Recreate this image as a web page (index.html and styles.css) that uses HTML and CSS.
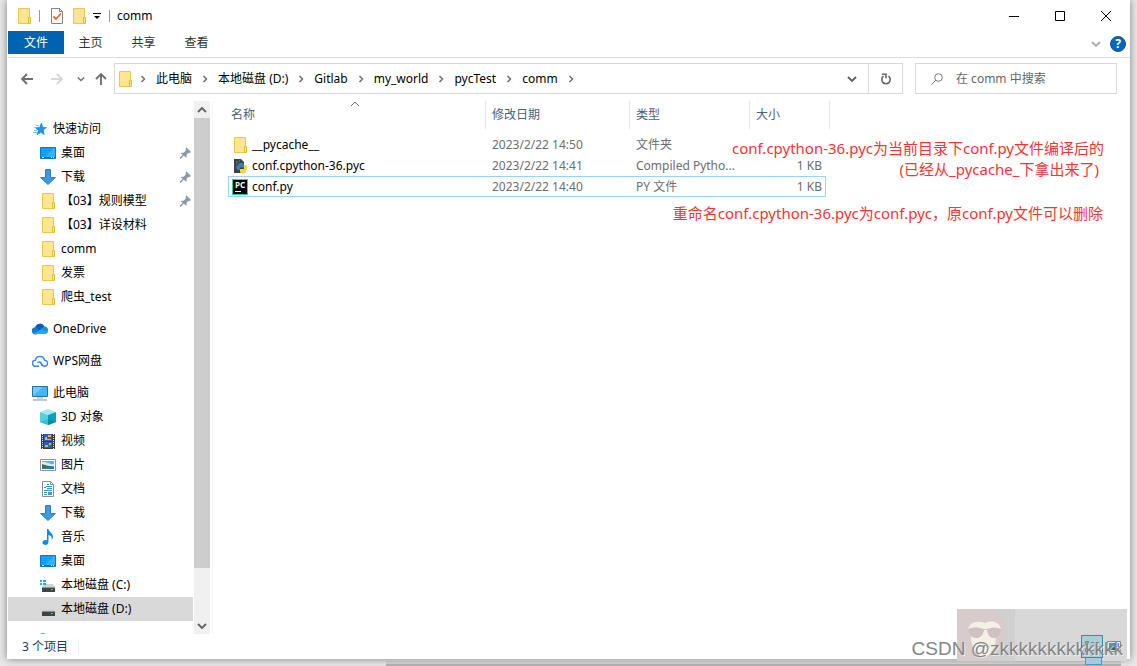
FILE: index.html
```html
<!doctype html>
<html lang="zh-CN">
<head>
<meta charset="utf-8">
<title>comm</title>
<link rel="stylesheet" href="styles.css">
</head>
<body>
<!-- 图标 -->
<svg class="defs" aria-hidden="true">
	<symbol id="i-folder" viewBox="0 0 16 16">
		<path d="M2.500 .5h11v15h-11z" fill="#ffe591" stroke="#ecc64a"/>
		<path d="M12.500 9.500h2v6h-2z" fill="#ffe591" stroke="#e3b93c"/>
	</symbol>
	<symbol id="i-star" viewBox="0 0 16 16">
		<path d="M9.500 2l1.200 4.200 3.800.3-3.200 2.500.9 4.500-3.400-2.300-3.800 2.600 1.300-4.300-2.800-2.700 4-.3z" fill="#1c97ea" stroke="#0d7bc8" stroke-width=".6"/>
		<path d="M4 4.500h3M2 6.500h2M2 9.500h3M1 11.500h4" stroke="#7cc4ef"/>
	</symbol>
	<symbol id="i-desktop" viewBox="0 0 16 16">
		<path d="M.5 2.500h15v11H.5z" fill="#12a0ff" stroke="#0877c0"/>
		<path d="M5 12L14 3h1v9z" fill="#36b1ff"/>
		<path d="M1 12.500h14" stroke="#0870b8"/>
		<path d="M2 12.500h2M11 12.500h1M13 12.500h1" stroke="#fff"/>
	</symbol>
	<symbol id="i-down" viewBox="0 0 16 16">
		<path d="M5.500.5h5v8h5L8 15.500.5 8.500h5z" fill="#3f97e8" stroke="#2a7dc9"/>
	</symbol>
	<symbol id="i-pin" viewBox="0 0 16 16">
		<path d="M9 3.500l4 4-2.500 1-1 1.500.2 3L3.500 8l3-.2L8.500 6z" fill="#8b99a6"/>
		<path d="M9 3l4.500 4.500M6.500 10L3 13.500" stroke="#8b99a6" stroke-width="1.500"/>
	</symbol>
	<symbol id="i-onedrive" viewBox="0 0 16 16">
		<path d="M3 7a5 5 0 0 1 9.500-1.500L9 11z" fill="#0a5fb4"/>
		<path d="M0 10.500A3.300 3.300 0 0 1 4.500 6.500L11 12l-7.500 1.500A3 3 0 0 1 0 10.500z" fill="#1379d0"/>
		<path d="M8 8.500l4-3A3.600 3.600 0 0 1 16 10l-1 2z" fill="#1490df"/>
		<path d="M1.500 12.600L9 8.500l6.700 2.500a2.500 2.500 0 0 1-2.400 2H3.500z" fill="#28a8ea"/>
	</symbol>
	<symbol id="i-wps" viewBox="0 0 16 16">
		<path d="M7 13.300H3.700A2.900 2.900 0 0 1 3.300 7.300 4.700 4.700 0 0 1 12.500 7.200a3 3 0 0 1 0 6.100c-2.500 0-2.500-3-4.500-3.500M5.500 9.700c2.500-1.700 5 .3 4 3.300" fill="none" stroke="#4186f5" stroke-width="1.500"/>
	</symbol>
	<symbol id="i-pc" viewBox="0 0 16 16">
		<path d="M.5 1.500h15v10H.5z" fill="#45b6fb" stroke="#23709e"/>
		<path d="M1 11L11 2H1z" fill="#74caff"/>
		<path d="M5 13h6" stroke="#9aa9b4"/>
		<path d="M1 15h14" stroke="#7e929f"/>
	</symbol>
	<symbol id="i-cube" viewBox="0 0 16 16">
		<path d="M0 3L8 0l8 3-8 3z" fill="#a5e9ef"/>
		<path d="M0 3l8 3v10l-8-3z" fill="#54cfdd"/>
		<path d="M16 3L8 6v10l8-3z" fill="#05a3c3"/>
		<path d="M8 10l8 3-8 3z" fill="#058d9c"/>
		<path d="M0 13l8-3v6z" fill="#35bccd"/>
	</symbol>
	<symbol id="i-video" viewBox="0 0 16 16">
		<path d="M1 1h14v15H1z" fill="#3c3c3c"/>
		<path d="M4 1h8v7H4zM4 9h8v6H4z" fill="#2860bd"/>
		<path d="M5 4h2v2h4v1H5zM8 2h3v2H8zM5 12h3v2H5zM9 10h2v2H9z" fill="#e8b52e"/>
		<path d="M7 5h2v1H7zM8 12h2v1H8z" fill="#c9442c"/>
		<path d="M2.500 1v15M13.500 1v15" stroke="#e3e3e3" stroke-dasharray="1 1"/>
	</symbol>
	<symbol id="i-picture" viewBox="0 0 16 16">
		<path d="M.5 2.500h15v11H.5z" fill="#fff" stroke="#8d959b"/>
		<path d="M2 4h12v8H2z" fill="#68aeea"/>
		<path d="M2 5h3l6 2h3v2H2z" fill="#d7ecf8"/>
		<path d="M2 7l3 1 4 1 5 1v2H2z" fill="#3e6c5c"/>
		<path d="M2 10.500h12V12H2z" fill="#2879a9"/>
	</symbol>
	<symbol id="i-doc" viewBox="0 0 16 16">
		<path d="M2.500.5h8l3 3v12h-11z" fill="#fff" stroke="#8a8f93"/>
		<path d="M10.500.5v3h3" fill="none" stroke="#8a8f93"/>
		<path d="M4 6.500h2M7 3.500h2M6 5.500h6M7 7.500h5M4 9.500h8M4 11.500h3M4 13.500h3" stroke="#2c94d8"/>
		<path d="M8 11h4v3H8z" fill="#5392b9"/>
	</symbol>
	<symbol id="i-music" viewBox="0 0 16 16">
		<path d="M7 0h1.500c.3 3 4.500 4 4.500 7.500 0 1.500-.5 2.500-1.500 3.500.8-3-.5-4.500-3-5v7c0 4-6 3.500-6 .7C2.500 11.500 5 10.500 7 11.300z" fill="#0b8de5"/>
	</symbol>
	<symbol id="i-disk" viewBox="0 0 16 16">
		<path d="M4 8h9l2 2.500H2z" fill="#cfd2d3"/>
		<path d="M2 10.500h13V15H2z" fill="#404446"/>
		<path d="M11 12.500h2" stroke="#45e16c"/>
	</symbol>
	<symbol id="i-sysdisk" viewBox="0 0 16 16">
		<path d="M5 7h8l2 3.500H2z" fill="#cfd2d3"/>
		<path d="M2 10.500h13V15H2z" fill="#404446"/>
		<path d="M11 12.500h2" stroke="#45e16c"/>
		<path d="M0 3h2v2H0zM3 3h3v2H3zM0 6h2v2H0zM3 6h3v2H3z" fill="#0fb3ec"/>
	</symbol>
	<symbol id="i-net" viewBox="0 0 16 16">
		<circle cx="3" cy="5" r="5" fill="#53b7b4"/>
	</symbol>
	<symbol id="i-pyc" viewBox="0 0 16 16">
		<path d="M2 1h7l3 3v11H2z" fill="#39424a"/>
		<path d="M4 4h2M4 6h1M4 9h1M7 3h1" stroke="#7c8890"/>
		<path d="M6 7c0-3 6-3 6 0v2.500H8v2.500H6c-2-1-1.500-4 0-5z" fill="#3d7db5"/>
		<path d="M12 7h2c2 1 1.500 5 0 5v2c-1 2.500-5 2-6 0v-3h4z" fill="#ffd43e"/>
	</symbol>
	<symbol id="i-check" viewBox="0 0 16 16">
		<path d="M2.500.5h8l3 3v12h-11z" fill="#fafafa" stroke="#858585"/>
		<path d="M10.500.5v3h3" fill="none" stroke="#858585"/>
		<path d="M4.500 8.500L7 11l5-5.500" fill="none" stroke="#f0642b" stroke-width="1.800"/>
	</symbol>
	<symbol id="i-right" viewBox="0 0 8 8"><path d="M2.500 1L5.500 4l-3 3" fill="none" stroke="currentColor" stroke-width="1.500"/></symbol>
	<symbol id="i-chev" viewBox="0 0 10 10"><path d="M1 3l4 4 4-4" fill="none" stroke="currentColor" stroke-width="1.800"/></symbol>
	<symbol id="i-chevup" viewBox="0 0 10 10"><path d="M1 7l4-4 4 4" fill="none" stroke="currentColor" stroke-width="1.800"/></symbol>
	<symbol id="i-sort" viewBox="0 0 10 10"><path d="M1 7l4-4 4 4" fill="none" stroke="currentColor"/></symbol>
	<symbol id="i-arrow" viewBox="0 0 16 16"><path d="M14 8H3M8 3L3 8l5 5" fill="none" stroke="currentColor" stroke-width="1.900"/></symbol>
</svg>

<div class="window">
	<header class="titlebar">
		<svg class="ico"><use href="#i-folder"/></svg>
		<i class="sep"></i>
		<button class="quick" aria-label="属性"><svg class="ico"><use href="#i-check"/></svg></button>
		<button class="quick" aria-label="新建文件夹"><svg class="ico"><use href="#i-folder"/></svg></button>
		<button class="more" aria-label="自定义快速访问工具栏"><svg width="8" height="8" viewBox="0 0 8 8"><path d="M0 1.500h8" stroke="#000"/><path d="M1 4h6L4 7z"/></svg></button>
		<i class="sep"></i>
		<h1>comm</h1>
		<div class="controls">
			<button aria-label="最小化"><svg width="10" height="10"><path d="M0 5.500h10" stroke="#000"/></svg></button>
			<button aria-label="最大化"><svg width="10" height="10"><path d="M.5.5h9v9h-9z" fill="none" stroke="#000"/></svg></button>
			<button aria-label="关闭"><svg width="10" height="10"><path d="M0 0l10 10M10 0L0 10" stroke="#000"/></svg></button>
		</div>
	</header>

	<nav class="ribbon">
		<button class="tab on">文件</button>
		<button class="tab">主页</button>
		<button class="tab">共享</button>
		<button class="tab">查看</button>
		<div class="help">
			<button aria-label="展开功能区"><svg class="chev light"><use href="#i-chev"/></svg></button>
			<button class="ask" aria-label="帮助">?</button>
		</div>
	</nav>

	<div class="toolbar">
		<div class="nav">
			<button aria-label="后退"><svg class="ico"><use href="#i-arrow"/></svg></button>
			<button class="off" aria-label="前进"><svg class="ico flip"><use href="#i-arrow"/></svg></button>
			<button class="recent" aria-label="最近浏览的位置"><svg><use href="#i-chev"/></svg></button>
			<button aria-label="上移"><svg class="ico up"><use href="#i-arrow"/></svg></button>
		</div>
		<div class="address">
			<svg class="ico"><use href="#i-folder"/></svg>
			<svg class="arr"><use href="#i-right"/></svg>
			<a href="#">此电脑</a><svg class="arr"><use href="#i-right"/></svg>
			<a href="#">本地磁盘 (D:)</a><svg class="arr"><use href="#i-right"/></svg>
			<a href="#">Gitlab</a><svg class="arr"><use href="#i-right"/></svg>
			<a href="#">my_world</a><svg class="arr"><use href="#i-right"/></svg>
			<a href="#">pycTest</a><svg class="arr"><use href="#i-right"/></svg>
			<a href="#">comm</a><svg class="arr"><use href="#i-right"/></svg>
			<button class="drop" aria-label="以前的位置"><svg class="chev"><use href="#i-chev"/></svg></button>
			<button class="refresh" aria-label="刷新"><svg width="12" height="12" viewBox="0 0 12 12"><path d="M8.500 3.200A4.200 4.200 0 1 1 3.500 3.200M2 1.200h4v4" fill="none" stroke="#666" stroke-width="1.600"/></svg></button>
		</div>
		<label class="search">
			<svg width="12" height="12" viewBox="0 0 12 12"><circle cx="7.500" cy="4.500" r="3.800" fill="none" stroke="#777"/><path d="M4.800 7.200L.5 11.500" stroke="#777"/></svg>
			<input type="text" placeholder="在 comm 中搜索" aria-label="搜索">
		</label>
	</div>

	<main class="content">
		<aside class="tree">
			<ul>
				<li class="root"><svg class="ico"><use href="#i-star"/></svg><a href="#">快速访问</a></li>
				<li><svg class="ico"><use href="#i-desktop"/></svg><a href="#">桌面</a><svg class="ico pin"><use href="#i-pin"/></svg></li>
				<li><svg class="ico"><use href="#i-down"/></svg><a href="#">下载</a><svg class="ico pin"><use href="#i-pin"/></svg></li>
				<li><svg class="ico"><use href="#i-folder"/></svg><a href="#">【03】规则模型</a><svg class="ico pin"><use href="#i-pin"/></svg></li>
				<li><svg class="ico"><use href="#i-folder"/></svg><a href="#">【03】详设材料</a></li>
				<li><svg class="ico"><use href="#i-folder"/></svg><a href="#">comm</a></li>
				<li><svg class="ico"><use href="#i-folder"/></svg><a href="#">发票</a></li>
				<li><svg class="ico"><use href="#i-folder"/></svg><a href="#">爬虫_test</a></li>
			</ul>
			<ul>
				<li class="root"><svg class="ico"><use href="#i-onedrive"/></svg><a href="#">OneDrive</a></li>
			</ul>
			<ul>
				<li class="root"><svg class="ico"><use href="#i-wps"/></svg><a href="#">WPS网盘</a></li>
			</ul>
			<ul>
				<li class="root"><svg class="ico"><use href="#i-pc"/></svg><a href="#">此电脑</a></li>
				<li><svg class="ico"><use href="#i-cube"/></svg><a href="#">3D 对象</a></li>
				<li><svg class="ico"><use href="#i-video"/></svg><a href="#">视频</a></li>
				<li><svg class="ico"><use href="#i-picture"/></svg><a href="#">图片</a></li>
				<li><svg class="ico"><use href="#i-doc"/></svg><a href="#">文档</a></li>
				<li><svg class="ico"><use href="#i-down"/></svg><a href="#">下载</a></li>
				<li><svg class="ico"><use href="#i-music"/></svg><a href="#">音乐</a></li>
				<li><svg class="ico"><use href="#i-desktop"/></svg><a href="#">桌面</a></li>
				<li><svg class="ico"><use href="#i-sysdisk"/></svg><a href="#">本地磁盘 (C:)</a></li>
				<li class="on"><svg class="ico"><use href="#i-disk"/></svg><a href="#">本地磁盘 (D:)</a></li>
			</ul>
			<ul>
				<li><svg class="ico"><use href="#i-net"/></svg></li>
			</ul>
		</aside>
		<div class="scroll">
			<svg class="chev"><use href="#i-chevup"/></svg>
			<div class="track"><div class="thumb"></div></div>
			<svg class="chev"><use href="#i-chev"/></svg>
		</div>
		<section class="files">
			<table>
				<colgroup><col class="name"><col class="date"><col class="type"><col class="size"><col class="edge"></colgroup>
				<thead>
					<tr>
						<th>名称<svg class="sort"><use href="#i-sort"/></svg></th>
						<th>修改日期</th>
						<th>类型</th>
						<th colspan="2">大小</th>
					</tr>
				</thead>
				<tbody>
					<tr><td><span class="file"><svg class="ico"><use href="#i-folder"/></svg>__pycache__</span></td><td>2023/2/22 14:50</td><td>文件夹</td><td class="kb"></td></tr>
					<tr><td><span class="file"><svg class="ico"><use href="#i-pyc"/></svg>conf.cpython-36.pyc</span></td><td>2023/2/22 14:41</td><td>Compiled Pytho...</td><td class="kb">1 KB</td></tr>
					<tr class="focus"><td><span class="file"><span class="pc">PC</span>conf.py</span></td><td>2023/2/22 14:40</td><td>PY 文件</td><td class="kb">1 KB</td></tr>
				</tbody>
			</table>
			<div class="note first">
				<p>conf.cpython-36.pyc为当前目录下conf.py文件编译后的</p>
				<p class="sub">(已经从_pycache_下拿出来了)</p>
			</div>
			<p class="note second">重命名conf.cpython-36.pyc为conf.pyc，原conf.py文件可以删除</p>
		</section>
	</main>

	<footer class="status"><span>3 个项目</span></footer>
</div>
<div class="behind"></div>

<div class="badge">
	<svg class="face" width="58" height="52" viewBox="0 0 58 52">
		<path d="M0 0h58v52H0z" fill="#d0d0d0"/>
		<path d="M0 0h34c9 4 14 9 14 18 3 9 0 18-6 22l-6 12H0z" fill="#d8cbcb"/>
		<path d="M11 20c2-7 9-9 17-6 8-3 13-1 16 5l-5 8c0 12-5 19-12 21-8-2-13-10-13-20z" fill="#f4f0e6"/>
		<path d="M11 20c5-2 11-2 15 0h5c5-2 9-2 13 0-1 6-3 9-7 9-4 0-6-3-7-8h-3c-1 6-4 8-8 8-5 0-7-4-8-9z" fill="#cfc0c1"/>
		<path d="M22 38c4-2 8-2 11 0" fill="none" stroke="#cfc0c1"/>
	</svg>
	<button class="view on" aria-label="详细信息"><svg width="16" height="14" viewBox="0 0 16 14"><path d="M1.500 1.500h3v3h-3zM1.500 8.500h3v3h-3z" fill="#fff" stroke="#6e8995"/><path d="M7 2.500h3M12 2.500h3M7 6.500h3M12 6.500h3M7 10.500h3M12 10.500h3" stroke="#6e8995"/></svg></button>
	<button class="view" aria-label="大图标"><svg width="14" height="12" viewBox="0 0 14 12"><path d="M.5.5h13v10H.5z" fill="#e8e8e8" stroke="#888"/><path d="M2 2h10v4H2z" fill="#4b91e0"/><path d="M2 6l3-1 7 3v1H2z" fill="#3e5c5c"/></svg></button>
</div>
<div class="mark">CSDN @zkkkkkkkkkkkkk</div>
</body>
</html>
```
FILE: styles.css
```css
*{margin:0;padding:0;box-sizing:border-box;}
body{height:100vh; padding:0 7px 7px; overflow:hidden; position:relative; background:#e8e8e8;
font:12px/16px "Noto Sans","Noto Sans CJK SC",sans-serif; color:#000;}
ul{list-style:none;}
a{color:inherit; text-decoration:none;}
button{border:0; background:none; font:inherit; color:inherit; display:flex; align-items:center; justify-content:center;}
svg{display:block; flex:none;}
.defs{position:absolute; width:0; height:0;}
.ico{width:16px; height:16px;}
.chev{width:10px; height:10px; color:#606060;}
.light{color:#aaa;}

.window{position:relative; z-index:1; height:100%; display:flex; flex-direction:column; background:#fff; border-left:1px solid #fff; box-shadow:0 0 8px rgba(0,0,0,.45);}

.titlebar{display:flex; align-items:center; height:31px; padding-left:8px;}
.titlebar .sep{width:1px; height:12px; background:#999; margin:0 9px 0 7px;}
.titlebar h1{font-size:12px; font-weight:normal; margin-left:-2px;}
.quick{width:16px; margin-right:6px;}
.more{width:8px; margin-right:1px;}
.controls{display:flex; margin-left:auto; padding-right:1px;}
.controls button{width:46px; height:30px;}

.ribbon{display:flex; height:27px; border-bottom:1px solid #dadbdc; color:#333;}
.tab{height:24px; width:53px;}
.tab.on{width:56px; height:23px; background:#0063b1; color:#fff;}
.help{display:flex; align-items:center; gap:9px; margin-left:auto; padding:0 4px 1px 0;}
.ask{width:16px; height:16px; border-radius:50%; background:#0066c0; color:#fff; font-weight:bold; border:1px solid #15548c;}

.toolbar{display:flex; height:40px; padding:5px 13px 4px 11px;}
.nav{display:flex; align-items:center; width:95px; color:#707070;}
.nav .off{color:#d8d8d8; margin-left:14px;}
.nav .recent{margin:0 8px 0 12px;}
.recent svg{width:8px; height:8px;}
.flip{transform:scaleX(-1);}
.up{transform:rotate(90deg);}
.address{flex:1; display:flex; align-items:center; border:1px solid #d9d9d9; padding-left:2px;}
.address .ico{margin-right:-3px;}
.arr{width:8px; height:8px; margin:0 9px; color:#707070;}
.drop{width:32px; margin-left:auto;}
.refresh{width:34px; align-self:stretch; border-left:1px solid #d9d9d9;}
.search{display:flex; align-items:center; gap:13px; width:202px; margin-left:12px; padding-left:15px; border:1px solid #d9d9d9;}
.search input{flex:1; min-width:0; border:0; outline:0; font:inherit; background:none;}
.search input::placeholder{color:#666; opacity:1;}

.content{flex:1; min-height:0; display:flex; padding-top:3px;}
.tree{width:185px; overflow:hidden; padding-top:16px;}
.tree ul{margin-bottom:8px;}
.tree li{display:flex; align-items:center; gap:5px; height:24px; padding-left:32px;}
.tree .root{padding-left:24px;}
.tree .on{background:#d9d9d9;}
.pin{margin-left:auto;}
.scroll{display:flex; flex-direction:column; align-items:center; justify-content:space-between; width:16px; margin-left:1px; padding:4px 0 3px; background:#f0f0f0;}
.track{flex:1; align-self:stretch; margin:3px 0;}
.thumb{height:90%; background:#cdcdcd;}

.files{position:relative; flex:1; margin-left:2px; padding-left:15px; border-left:1px solid #f5f5f5;}
table{border-spacing:0; table-layout:fixed; width:602px;}
th{height:28px; font-weight:normal; text-align:left; color:#4c607a; padding-left:6px; border-right:1px solid #e5e5e5; position:relative;}
th:first-child{padding-left:3px;}
thead::after{content:""; display:block; height:5px;}
.name{width:258px;}
.date{width:144px;}
.type{width:120px;}
.size{width:76px;}
.edge{width:4px;}
.sort{position:absolute; top:-2px; left:50%; width:10px; height:10px; margin-left:-7px; color:#666;}
td{height:21px; padding-left:6px; color:#6d6d6d; white-space:nowrap; border:0 solid transparent; border-width:1px 0;}
td:first-child{padding-left:3px; border-left-width:1px; color:#000;}
.file{display:flex; align-items:center; gap:4px; height:19px;}
td.kb{text-align:right; padding-right:3px; border-right-width:1px;}
.focus td{border-color:#99d1ff;}
.pc{width:16px; height:16px; background:#000; border:1px solid #20d590; color:#fff; font:bold 8px/9px "Noto Sans",sans-serif; text-align:center;}
.pc::after{content:""; display:block; width:6px; height:1px; margin:2px 0 0 2px; background:#fff;}

.note{position:absolute; font-size:15px; line-height:21px; color:#fc3232; white-space:nowrap; text-align:right;}
.first{top:37px; right:26px;}
.sub{padding-right:5px;}
.second{top:102px; right:27px;}

.status{display:flex; align-items:center; height:25px; padding-left:14px; color:#1e395b;}
.status span{padding-right:10px; border-right:1px solid #eee;}

.behind{position:absolute; left:386px; right:16px; bottom:0; height:5px; background:#d8d8d8; border-bottom:2px solid #b5b5b5;}
.badge{position:absolute; z-index:2; right:10px; bottom:5px; width:170px; height:52px; display:flex; align-items:flex-end; background:#d8d8d8;}
.badge .view{width:22px; height:23px; margin-bottom:3px;}
.badge .on{position:relative; margin-left:auto; background:#aecbd8; border:1px solid #2d8fbd;}
.badge .on::after{content:""; position:absolute; left:3px; top:22px; width:15px; height:6px; background:#a9c9d8; border:1px solid #4b9cc2; border-top:0;}
.face + .on + .view{margin-right:2px;}
.mark{position:absolute; z-index:3; right:14px; bottom:5px; font:19px/24px "Liberation Sans",sans-serif; color:#858585; text-shadow:1px 1px 0 rgba(255,255,255,.6);}
```
